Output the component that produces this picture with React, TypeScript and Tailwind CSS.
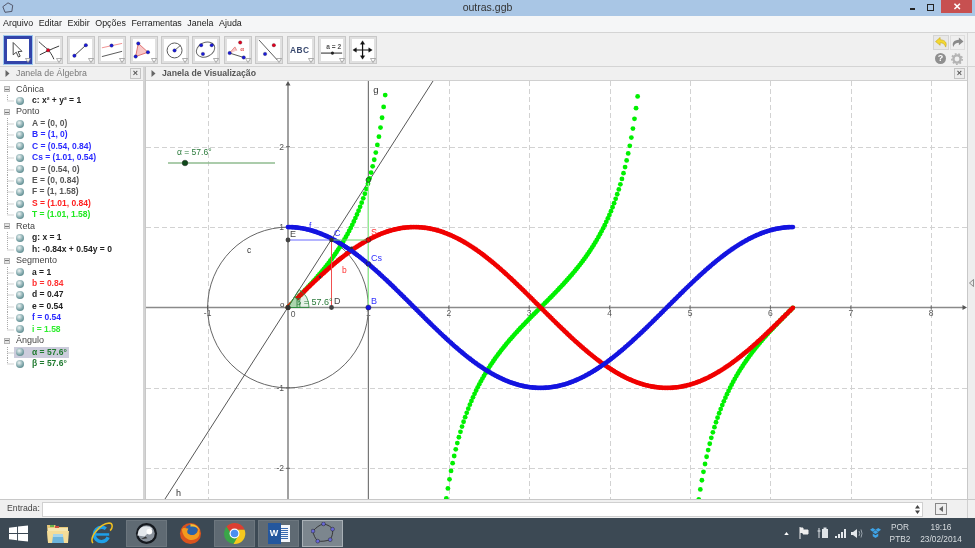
import React from "react";

const X0 = 288, Y0 = 307.5, U = 80.4;
const sx = (x: number) => X0 + x * U;
const sy = (y: number) => Y0 - y * U;
const crisp = (v: number) => Math.round(v) + 0.5;
const params: number[] = [];
for (let t = 0; t <= 6.2832; t += 0.0195) params.push(t);

type Item = { t: string; c?: string; sel?: boolean };
const groups: { name: string; items: Item[] }[] = [
  { name: "Cônica", items: [{ t: "c: x² + y² = 1", c: "text-[#222]" }] },
  { name: "Ponto", items: [
    { t: "A = (0, 0)", c: "text-[#555]" }, { t: "B = (1, 0)", c: "text-[#2a2aff]" },
    { t: "C = (0.54, 0.84)", c: "text-[#2a2aff]" }, { t: "Cs = (1.01, 0.54)", c: "text-[#2a2aff]" },
    { t: "D = (0.54, 0)", c: "text-[#555]" }, { t: "E = (0, 0.84)", c: "text-[#555]" },
    { t: "F = (1, 1.58)", c: "text-[#555]" }, { t: "S = (1.01, 0.84)", c: "text-[#ff2020]" },
    { t: "T = (1.01, 1.58)", c: "text-[#20e820]" } ] },
  { name: "Reta", items: [{ t: "g: x = 1", c: "text-[#222]" }, { t: "h: -0.84x + 0.54y = 0", c: "text-[#222]" }] },
  { name: "Segmento", items: [
    { t: "a = 1", c: "text-[#222]" }, { t: "b = 0.84", c: "text-[#ff3030]" }, { t: "d = 0.47", c: "text-[#222]" },
    { t: "e = 0.54", c: "text-[#222]" }, { t: "f = 0.54", c: "text-[#2a2aff]" }, { t: "i = 1.58", c: "text-[#30ee30]" } ] },
  { name: "Ângulo", items: [{ t: "α = 57.6°", c: "text-[#1f7a2f]", sel: true }, { t: "β = 57.6°", c: "text-[#1f7a2f]" }] },
];

function Connector({ last }: { last: boolean }) {
  return (
    <svg width="14" height="11.45" className="shrink-0" viewBox="0 0 14 11.45">
      <path d={last ? "M7.5 0V6H14" : "M7.5 0V11.45M7.5 6H14"} stroke="#a8a8a8" strokeWidth="1" strokeDasharray="1 1" fill="none" />
    </svg>
  );
}

function Tree() {
  return (
    <div className="pt-[2.5px] text-[8.5px] leading-[11.45px]">
      {groups.map((g) => (
        <div key={g.name}>
          <div className="flex items-center h-[11.45px]">
            <div className="ml-[4px] w-[6px] h-[6px] bg-[#e4e4e4] border border-[#b5b5b5] flex items-center justify-center shrink-0">
              <div className="w-[4px] h-px bg-[#777]" />
            </div>
            <span className="ml-[6px] text-[#444] text-[9px]">{g.name}</span>
          </div>
          {g.items.map((it, i) => (
            <div key={it.t} className="flex items-center h-[11.45px]">
              <Connector last={i === g.items.length - 1} />
              <div className={`flex items-center h-[11.45px] pr-[2px] ${it.sel ? "bg-[#ccccdc]" : ""}`}>
                <div className="ml-[2px] w-[8px] h-[8px] rounded-full shrink-0 bg-[radial-gradient(circle_at_40%_35%,#eef4f4,#7fa6aa_55%,#3f6f72)]" />
                <span className={`ml-[8px] font-bold whitespace-nowrap ${it.c}`}>{it.t}</span>
              </div>
            </div>
          ))}
        </div>
      ))}
    </div>
  );
}

const B = "#1a1ad8";
const Dot = ({ x, y, c = B, r = 2 }: { x: number; y: number; c?: string; r?: number }) => (
  <circle cx={x} cy={y} r={r} fill={c} stroke="#222" strokeWidth="0.3" />
);

const tools: React.ReactNode[] = [
  <path key="a" d="M7 4 L7 18 L10.5 15 L13 20.5 L15 19.5 L12.6 14.3 L17 14 Z" fill="#fff" stroke="#333" strokeWidth="1" />,
  <g key="b"><path d="M1 3 C6 8 12 12 13 14 C15 17 17 20 18 23" stroke="#333" strokeWidth="1.1" fill="none" /><path d="M2 18 C8 15 16 11 24 8" stroke="#333" strokeWidth="1.1" fill="none" /><Dot x={11.5} y={12.8} c="#e00020" /></g>,
  <g key="c"><path d="M5 19 L18 7" stroke="#444" strokeWidth="1.1" /><Dot x={5} y={19} /><Dot x={18} y={7} /></g>,
  <g key="d"><path d="M1 10 L24 5" stroke="#f09090" strokeWidth="1.1" /><path d="M1 20 L24 14" stroke="#555" strokeWidth="1.1" /><Dot x={12} y={7.5} /></g>,
  <g key="e"><path d="M6 5 L3 20 L17 15 Z" fill="#f8c8c8" stroke="#e07070" strokeWidth="1.1" /><Dot x={6} y={5} /><Dot x={3} y={20} /><Dot x={17} y={15} /></g>,
  <g key="f"><circle cx="12" cy="13" r="8.5" fill="none" stroke="#555" strokeWidth="1.1" /><path d="M12 13 L19 7" stroke="#555" strokeWidth="1" /><Dot x={12} y={13} /></g>,
  <g key="g"><ellipse cx="12" cy="12" rx="11" ry="8" transform="rotate(-25 12 12)" fill="none" stroke="#666" strokeWidth="1.1" /><Dot x={7} y={7} /><Dot x={19} y={7} /><Dot x={9} y={17} /></g>,
  <g key="h"><path d="M2 17 L9 9 L11 13" fill="#f8c8c8" stroke="#e08080" strokeWidth="1" /><path d="M3 16 L19 21" stroke="#444" strokeWidth="1" /><Dot x={3} y={16} /><Dot x={19} y={21} /><Dot x={15} y={4} c="#e00020" /><text x="15" y="14" fontSize="7" fontWeight="bold" fill="#e05050">α</text></g>,
  <g key="i"><path d="M1 1 L22 24" stroke="#555" strokeWidth="1.1" /><Dot x={18} y={7} c="#e00020" /><Dot x={8} y={17} /></g>,
  <text key="j" x="0" y="16" fontSize="9.5" fontWeight="bold" letterSpacing="0.6" fill="#3a4a70">ABC</text>,
  <g key="k"><text x="6" y="11" fontSize="7.5" fontWeight="bold" fill="#555">a = 2</text><path d="M0 16 H24" stroke="#333" strokeWidth="1.2" /><circle cx="13" cy="16" r="1.8" fill="#222" /></g>,
  <g key="l" stroke="#111" strokeWidth="1.4" fill="#111"><path d="M12 4 V21 M3 12.5 H21" fill="none" /><path d="M12 2 L9.5 6 H14.5 Z M12 23 L9.5 19 H14.5 Z M1 12.5 L5 10 V15 Z M23 12.5 L19 10 V15 Z" strokeWidth="0.4" /></g>,
];

function Toolbar() {
  return (
    <div className="h-[35px] bg-[#f0f0f0] border-t border-b border-[#d4d4d4] flex items-center pl-[4px] shrink-0">
      <div className="flex gap-[3.4px]">
        {tools.map((t, i) => (
          <div key={i} className={i === 0 ? "relative w-[28px] h-[28px] bg-white border-[3px] border-[#3344aa] outline outline-1 outline-[#9cc8ee]" : "relative w-[28px] h-[28px] bg-white border-[3px] border-[#e0e0e0] outline outline-1 outline-[#c8c8c8] -outline-offset-1"}>
            <svg viewBox="0 0 25 25" className="w-full h-full">{t}</svg>
            <svg viewBox="0 0 6 5" className="absolute right-[-2px] bottom-[-2px] w-[6px] h-[5px]">
              <path d="M0.5 0.5 H5.5 L3 4.5 Z" fill="#fff" stroke="#888" strokeWidth="0.7" />
            </svg>
          </div>
        ))}
      </div>
      <div className="ml-auto mr-[2px] flex flex-col gap-[3px] items-center">
        <div className="flex gap-[1px]">
          <div className="w-[16px] h-[15px] bg-[#e8e8e8] border border-[#d4d4d4] flex items-center justify-center">
            <svg viewBox="0 0 14 12" className="w-[13px] h-[11px]"><path d="M5.5 0.5 L0.5 5 L5.5 9 V6.3 C8.5 6.3 10.5 7.5 11.5 11 C13.5 6.5 11 3.2 5.5 3 Z" fill="#f4d830" stroke="#c0a418" strokeWidth="0.6" /></svg>
          </div>
          <div className="w-[15px] h-[15px] bg-[#efefef] border border-[#dedede] flex items-center justify-center">
            <svg viewBox="0 0 14 12" className="w-[13px] h-[11px]"><path d="M8.5 0.5 L13.5 5 L8.5 9 V6.3 C5.5 6.3 3.5 7.5 2.5 11 C0.5 6.5 3 3.2 8.5 3 Z" fill="#8a8a8a" /></svg>
          </div>
        </div>
        <div className="flex gap-[5px]">
          <div className="w-[11px] h-[11px] rounded-full bg-[#8f8f8f] text-white text-[9px] font-bold leading-[11px] text-center">?</div>
          <svg viewBox="0 0 12 12" className="w-[12px] h-[12px]"><circle cx="6" cy="6" r="3.6" fill="none" stroke="#b4b4b4" strokeWidth="2.4" /><circle cx="6" cy="6" r="5.2" fill="none" stroke="#b4b4b4" strokeWidth="1.6" strokeDasharray="1.8 1.8" /></svg>
        </div>
      </div>
      <div className="w-[8px] self-stretch border-l border-[#d8d8d8]" />
    </div>
  );
}

const Tri = () => <svg viewBox="0 0 5 7" className="w-[5px] h-[7px] shrink-0"><path d="M0.5 0 L4.5 3.5 L0.5 7 Z" fill="#666" /></svg>;
const CloseBox = () => (
  <div className="w-[11px] h-[11px] bg-[#ececec] border border-[#c4c4c4] text-[#555] text-[9px] leading-[9px] text-center font-bold">×</div>
);

function Chart() {
  const vgrid = [-1, 2, 3, 4, 5, 6, 7, 8];
  const hgrid = [2, 1, -1, -2];
  const green = params.map((t) => ({ x: sx(t), y: sy(Math.tan(t)) })).filter((p) => p.y > 89 && p.y < 502);
  return (
    <svg viewBox="146 81 821 418" width="821" height="418" className="block bg-white font-['Liberation_Sans',sans-serif]">
      {vgrid.map((v) => <line key={v} x1={crisp(sx(v))} x2={crisp(sx(v))} y1={81} y2={499} stroke="#d2d2d2" strokeDasharray="5 3" />)}
      {hgrid.map((v) => <line key={v} y1={crisp(sy(v))} y2={crisp(sy(v))} x1={146} x2={967} stroke="#d2d2d2" strokeDasharray="5 3" />)}
      <line x1={146} x2={965} y1={Y0} y2={Y0} stroke="#8a8a8a" strokeWidth="1.6" />
      <line x1={X0} x2={X0} y1={83} y2={499} stroke="#8a8a8a" strokeWidth="1.6" />
      <path d="M288 81 L285.5 85.5 H290.5 Z M967 307.5 L962.5 305 V310 Z" fill="#555" />
      {[-1, 1, 2, 3, 4, 5, 6, 7, 8].map((v) => (
        <g key={v}>
          <line x1={sx(v)} x2={sx(v)} y1={Y0 - 2} y2={Y0 + 2} stroke="#666" />
          <text x={sx(v)} y={316} fontSize="8.5" textAnchor="middle" fill="#555">{v}</text>
        </g>
      ))}
      <text x={293} y={317} fontSize="8.5" textAnchor="middle" fill="#555">0</text>
      {hgrid.map((v) => (
        <g key={v}>
          <line x1={X0 - 2} x2={X0 + 2} y1={sy(v)} y2={sy(v)} stroke="#666" />
          <text x={284} y={sy(v) + 3} fontSize="8.5" textAnchor="end" fill="#555">{v}</text>
        </g>
      ))}
      <circle cx={X0} cy={Y0} r={U} fill="none" stroke="#555" strokeWidth="0.9" />
      <line x1={368.4} x2={368.4} y1={81} y2={499} stroke="#777" strokeWidth="1.2" />
      <line x1={433} y1={81} x2={165} y2={499} stroke="#444" strokeWidth="0.9" />
      <line x1={168} x2={275} y1={163} y2={163} stroke="#8fbb8f" strokeWidth="1.3" />
      <circle cx={185} cy={163} r={2.8} fill="#0e4a1a" stroke="#222" strokeWidth="0.5" />
      <text x={177} y={155} fontSize="8.5" fill="#2a7a3a">α = 57.6°</text>
      {green.map((p, i) => <circle key={i} cx={p.x} cy={p.y} r={2.4} fill="#00f000" />)}
      {params.map((t, i) => <circle key={i} cx={sx(t)} cy={sy(Math.sin(t))} r={2.4} fill="#f00000" />)}
      {params.map((t, i) => <circle key={i} cx={sx(t)} cy={sy(Math.cos(t))} r={2.4} fill="#1414e0" />)}
      <line x1={288} x2={331.5} y1={240} y2={240} stroke="#6a6aff" strokeWidth="1" />
      <line x1={331.5} x2={368} y1={240} y2={240} stroke="#70d070" strokeWidth="1" />
      <line x1={331.5} x2={331.5} y1={240} y2={307} stroke="#f05050" strokeWidth="1" />
      <line x1={368.4} x2={368.4} y1={180} y2={307} stroke="#90ee90" strokeWidth="1.2" />
      <path d="M288 307.5 L300 307.5 A12 12 0 0 0 294.5 297 Z" fill="#bfe0bf" stroke="#2a8a3a" strokeWidth="0.8" />
      <path d="M288 307.5 L309 307.5 A21 21 0 0 0 299 289.5 Z" fill="#2a8a3a" fillOpacity="0.12" stroke="#2a8a3a" strokeWidth="0.8" />
      <circle cx={288} cy={240} r={2.4} fill="#444" />
      <circle cx={331.5} cy={240} r={2.2} fill="#333" />
      <circle cx={331.5} cy={307.5} r={2.4} fill="#444" />
      <circle cx={288} cy={307.5} r={2.6} fill="#333" />
      <circle cx={368.4} cy={307.5} r={2.6} fill="#1414e0" stroke="#222" strokeWidth="0.4" />
      <circle cx={368.4} cy={264} r={2.4} fill="#1414e0" stroke="#222" strokeWidth="0.6" />
      <circle cx={368.4} cy={240} r={2.4} fill="#f00000" stroke="#222" strokeWidth="0.6" />
      <circle cx={368.4} cy={180} r={2.4} fill="#00e000" stroke="#222" strokeWidth="0.7" />
      <circle cx={351.5} cy={248} r={1.4} fill="#333" />
      <circle cx={320} cy={277} r={1.2} fill="#333" />
      <g fontSize="9">
        <text x={376} y={93} fill="#333" fontSize="9.5" textAnchor="middle">g</text>
        <text x={176} y={496} fill="#333">h</text>
        <text x={247} y={253} fill="#333" fontSize="8.5">c</text>
        <text x={290} y={237} fill="#444">E</text>
        <text x={334} y={236} fill="#3030ff">C</text>
        <text x={371} y={235} fill="#ff3030">S</text>
        <text x={371} y={261} fill="#3030ff">Cs</text>
        <text x={342} y={273} fill="#ff3030" fontSize="8.5">b</text>
        <text x={334} y={304} fill="#444">D</text>
        <text x={371} y={304} fill="#3030ff">B</text>
        <text x={309} y={229} fill="#3030ff" fontSize="8.5">f</text>
        <text x={280} y={307} fill="#333" fontSize="8">o</text>
        <text x={296} y={305} fill="#2a7a3a">β = 57.6°</text>
      </g>
    </svg>
  );
}

function Windows() {
  return <svg viewBox="0 0 20 17" className="w-[19px] h-[17px]"><path d="M0 2.5 L8.5 1.3 V8 H0 Z M9.5 1.1 L20 0 V8 H9.5 Z M0 9 H8.5 V15.7 L0 14.5 Z M9.5 9 H20 V17 L9.5 15.9 Z" fill="#fff" /></svg>;
}
function Folder() {
  return <svg viewBox="0 0 24 22" className="w-[24px] h-[22px]"><path d="M1 3 H9 L11 5 H22 V20 H2 Z" fill="#e8c978" /><path d="M2 6 H22 V10 H2 Z" fill="#f5e6b0" /><rect x="4" y="3" width="4" height="2" fill="#6ab04a" /><rect x="9" y="4" width="4" height="2" fill="#d05040" /><path d="M1 9 H23 L22 21 H2 Z" fill="#f4dc98" /><path d="M7 14 H17 L18 21 H6 Z" fill="#6cb4dc" /><rect x="7" y="12" width="10" height="3" fill="#a4d4ec" /></svg>;
}
function IE() {
  return <svg viewBox="0 0 24 24" className="w-[23px] h-[23px]"><circle cx="12" cy="13" r="7.5" fill="none" stroke="#1ea0e8" strokeWidth="3.6" strokeDasharray="37 10" strokeDashoffset="-3" /><path d="M5 13 H20" stroke="#1ea0e8" strokeWidth="2.6" /><path d="M3 22 C-1 16 10 2 20 1 C24 1 24 6 21 9" fill="none" stroke="#f0c020" strokeWidth="1.6" /></svg>;
}
function Steam() {
  return <svg viewBox="0 0 24 24" className="w-[23px] h-[23px]"><circle cx="12" cy="12" r="11" fill="#15191f" /><circle cx="12" cy="12" r="8.6" fill="#8a929c" /><path d="M2.5 14 L10 15 L18 7 C14 3 6 4 3.6 9 Z" fill="#e4e8ec" /><circle cx="15" cy="10" r="3" fill="#fff" /><path d="M6 18 L11 15 L13 17 Z" fill="#333" /></svg>;
}
function Firefox() {
  return <svg viewBox="0 0 24 24" className="w-[23px] h-[23px]"><circle cx="12" cy="12" r="11" fill="#d9531e" /><circle cx="13" cy="9" r="6.5" fill="#2a62a8" /><path d="M3 8 C4 18 14 22 20 16 C22 13 22 10 20 7 C20 12 15 15 11 13 C8 12 8 9 10 7 C6 6 4 6 3 8 Z" fill="#f29a1e" /><path d="M12 2 C17 2 21 5 22 10 C20 6 16 4 12 5 Z" fill="#f8c030" /></svg>;
}
function Chrome() {
  return <svg viewBox="0 0 24 24" className="w-[23px] h-[23px]"><circle cx="12" cy="12" r="11" fill="#3aa648" /><path d="M12 1 A11 11 0 0 1 22.5 8 H12 A4.5 4.5 0 0 0 7.8 11 L3.6 4.8 A11 11 0 0 1 12 1 Z" fill="#dc3e32" /><path d="M22.5 8 A11 11 0 0 1 11 23 L16 14 A4.5 4.5 0 0 0 15 8 Z" fill="#f6c81e" /><circle cx="12" cy="12" r="5.2" fill="#fff" /><circle cx="12" cy="12" r="4" fill="#4a8ef0" /></svg>;
}
function Word() {
  return <div className="relative w-[22px] h-[21px]">
    <div className="absolute right-0 top-[2px] w-[14px] h-[17px] bg-[#f4f6fa] flex flex-col justify-center gap-[1px] pl-[3px] pr-[2px]">
      {[0,1,2,3,4,5].map((i) => <div key={i} className="h-px bg-[#3a6ab0]" />)}
    </div>
    <div className="absolute left-0 top-0 w-[13px] h-[21px] bg-[#24579e] text-white text-[9px] font-bold leading-[21px] text-center">W</div>
  </div>;
}
function Ggb() {
  const pts = [[13, 2], [22.5, 7.5], [20, 18.5], [7, 20], [2, 9.5]];
  return <svg viewBox="0 0 25 23" className="w-[24px] h-[22px]"><path d="M13 2 C18 3 21 5 22.5 7.5 C23 12 22 15 20 18.5 C16 20 11 20.5 7 20 C4 17 2.5 13 2 9.5 C5 6 9 3 13 2 Z" fill="none" stroke="#333" strokeWidth="1" />{pts.map((p, i) => <circle key={i} cx={p[0]} cy={p[1]} r="2" fill="#6868d8" stroke="#222" strokeWidth="0.5" />)}</svg>;
}

function TaskBtn({ children, w, on, hot }: { children: React.ReactNode; w: string; on?: boolean; hot?: boolean }) {
  return (
    <div className={`${w} h-[27px] flex items-center justify-center shrink-0 ${hot ? "bg-[#7c868e] border border-[#a8b0b6]" : on ? "bg-[#5f6a73] border border-[#6c767e]" : ""}`}>
      {children}
    </div>
  );
}

function Taskbar() {
  return (
    <div className="h-[30px] bg-[#3c4954] flex items-center text-[#d8dde0] text-[8.3px] shrink-0">
      <div className="w-[36px] flex justify-center"><Windows /></div>
      <div className="flex items-center">
        <TaskBtn w="w-[43px]"><Folder /></TaskBtn>
        <TaskBtn w="w-[45px]"><IE /></TaskBtn>
        <div className="w-[2px]" />
        <TaskBtn w="w-[41px]" on><Steam /></TaskBtn>
        <TaskBtn w="w-[47px]"><Firefox /></TaskBtn>
        <TaskBtn w="w-[41px]" on><Chrome /></TaskBtn>
        <div className="w-[3px]" />
        <TaskBtn w="w-[41px]" on><Word /></TaskBtn>
        <div className="w-[3px]" />
        <TaskBtn w="w-[41px]" hot><Ggb /></TaskBtn>
      </div>
      <div className="ml-auto flex items-center pr-[13px]">
        <svg viewBox="0 0 6 4" className="w-[5px] h-[3px] mr-[10px]"><path d="M0 4 L3 0 L6 4 Z" fill="#fff" /></svg>
        <svg viewBox="0 0 10 12" className="w-[10px] h-[12px] mr-[8px]"><path d="M1 0 V12 M1 1 H4 V3 H9 V7 H4 V5.5 H1" fill="#eee" stroke="#eee" strokeWidth="1" /></svg>
        <svg viewBox="0 0 12 12" className="w-[12px] h-[12px] mr-[6px]"><rect x="5" y="2" width="6" height="9" fill="#dfe4e8" /><rect x="6.5" y="0.5" width="3" height="1.5" fill="#dfe4e8" /><path d="M2 1 V11 M0.5 4 H3.5" stroke="#dfe4e8" /></svg>
        <svg viewBox="0 0 12 10" className="w-[12px] h-[10px] mr-[4px]"><path d="M0 8h2v2H0zM3 6h2v4H3zM6 4h2v6H6zM9 1h2v9H9z" fill="#e4e8ec" /></svg>
        <svg viewBox="0 0 12 11" className="w-[12px] h-[11px] mr-[7px]"><path d="M0 4 H2 L6 1 V10 L2 7 H0 Z" fill="#e4e8ec" /><path d="M8 3 Q9.5 5.5 8 8 M10 1.5 Q12 5.5 10 9.5" fill="none" stroke="#9aa4ac" /></svg>
        <svg viewBox="0 0 12 12" className="w-[11px] h-[11px] mr-[5px]"><path d="M3 0 L6 2 L3 4 L0 2 Z M9 0 L12 2 L9 4 L6 2 Z M3 4.5 L6 2.5 L9 4.5 L6 6.5 Z M3 6 L6 8 L9 6 L9 9 L6 11 L3 9 Z" fill="#3ea4e8" /></svg>
        <div className="w-[28px] text-center leading-[12px] mr-[6px]"><div>POR</div><div>PTB2</div></div>
        <div className="w-[42px] text-center leading-[12px]"><div>19:16</div><div>23/02/2014</div></div>
      </div>
    </div>
  );
}

export default function App() {
  return (
    <div className="w-[975px] h-[548px] overflow-hidden flex flex-col bg-[#f0f0f0] font-['Liberation_Sans',Arial,sans-serif] blur-[0.3px]">
      <div className="h-[16px] bg-[#a9c6e5] grid grid-cols-[1fr_auto_1fr] items-center shrink-0">
        <div className="pl-[2px]">
          <svg viewBox="0 0 14 14" className="w-[12px] h-[12px]"><path d="M7 1 L12.5 4 L11.5 11 L3.5 12 L1 5.5 Z" fill="none" stroke="#445" strokeWidth="1" /></svg>
        </div>
        <div className="text-[10.5px] text-[#333]">outras.ggb</div>
        <div className="flex justify-end items-start h-full pr-[3px]">
          <div className="w-[5px] h-[2px] bg-[#222] mt-[8px] mr-[12px]" />
          <div className="w-[7px] h-[7px] border border-[#222] mt-[4px] mr-[7px]" />
          <div className="w-[31px] h-[13px] bg-[#c75050] text-white text-[10px] font-bold leading-[13px] text-center">✕</div>
        </div>
      </div>
      <div className="h-[16px] bg-[#f5f6f7] flex items-center pl-[3px] gap-[5.6px] text-[8.9px] text-[#222] shrink-0">
        {["Arquivo", "Editar", "Exibir", "Opções", "Ferramentas", "Janela", "Ajuda"].map((m) => <span key={m}>{m}</span>)}
      </div>
      <Toolbar />
      <div className="flex-1 flex min-h-0 border-b border-[#c8c8c8]">
        <div className="w-[145px] shrink-0 flex flex-col border-r-2 border-[#d4d4d4]">
          <div className="h-[14px] bg-[#f0f0f0] border-b border-[#d0d0d0] flex items-center pl-[5px] pr-[2px] gap-[6px] shrink-0">
            <Tri />
            <span className="text-[8.8px] text-[#777] flex-1">Janela de Álgebra</span>
            <CloseBox />
          </div>
          <div className="flex-1 bg-white overflow-hidden"><Tree /></div>
        </div>
        <div className="flex-1 flex min-w-0">
          <div className="w-[822px] flex flex-col border-l border-[#c8c8c8]">
            <div className="h-[14px] bg-[#f0f0f0] border-b border-[#d0d0d0] flex items-center pl-[5px] pr-[2px] gap-[6px] shrink-0">
              <Tri />
              <span className="text-[8.7px] font-bold text-[#555] flex-1">Janela de Visualização</span>
              <CloseBox />
            </div>
            <Chart />
          </div>
          <div className="flex-1 bg-[#eeeeee] border-l border-[#c8c8c8] flex items-center justify-end">
            <svg viewBox="0 0 5 8" className="w-[5px] h-[8px] mr-[1px]"><path d="M4.5 0.5 L0.5 4 L4.5 7.5 Z" fill="#e8e8e8" stroke="#666" strokeWidth="0.7" /></svg>
          </div>
        </div>
      </div>
      <div className="h-[18px] bg-[#f0f0f0] flex items-center shrink-0 text-[8.7px] text-[#444] pl-[7px]">
        <span className="w-[35px]">Entrada:</span>
        <div className="w-[881px] h-[15px] bg-white border border-[#d0d0d0] flex items-center justify-end pr-[2px]">
          <svg viewBox="0 0 5 9" className="w-[5px] h-[9px]"><path d="M2.5 0 L5 3.5 H0 Z M2.5 9 L5 5.5 H0 Z" fill="#444" /></svg>
        </div>
        <div className="ml-[12px] w-[12px] h-[12px] bg-[#eee] border border-[#888] flex items-center justify-center">
          <svg viewBox="0 0 4 6" className="w-[4px] h-[6px]"><path d="M4 0 L0 3 L4 6 Z" fill="#666" /></svg>
        </div>
        <div className="ml-auto w-[8px] self-stretch border-l border-[#d0d0d0]" />
      </div>
      <Taskbar />
    </div>
  );
}
